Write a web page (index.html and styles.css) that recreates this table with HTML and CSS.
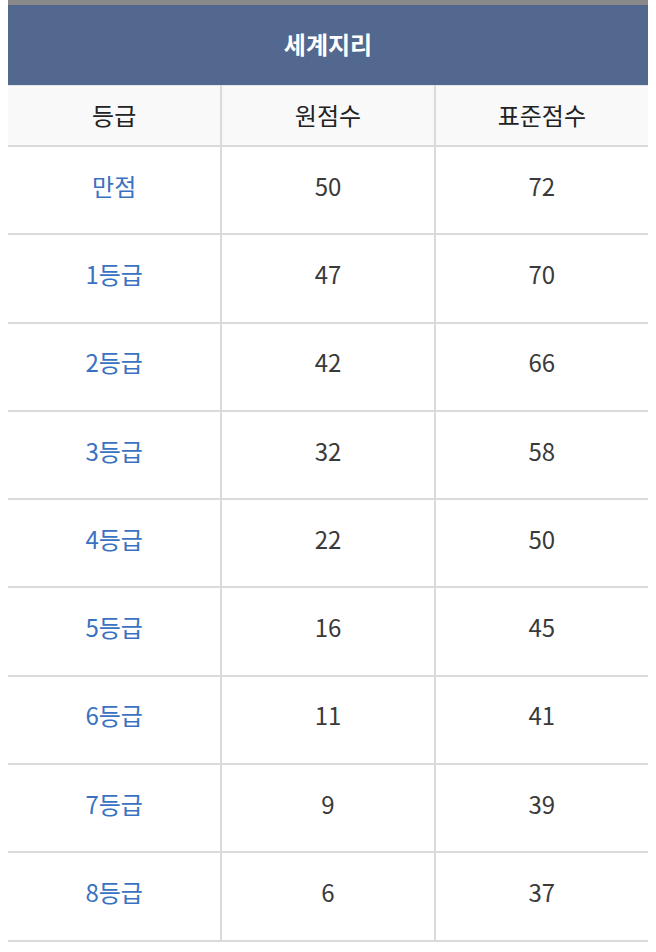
FILE: index.html
```html
<!DOCTYPE html>
<html lang="ko">
<head>
<meta charset="utf-8">
<link rel="stylesheet" href="styles.css">
</head>
<body>
<div class="wrap">
  <div class="title">세계지리</div>
  <table class="grade">
    <thead>
      <tr><th>등급</th><th>원점수</th><th>표준점수</th></tr>
    </thead>
    <tbody>
      <tr><td class="g">만점</td><td>50</td><td>72</td></tr>
      <tr><td class="g">1등급</td><td>47</td><td>70</td></tr>
      <tr><td class="g">2등급</td><td>42</td><td>66</td></tr>
      <tr><td class="g">3등급</td><td>32</td><td>58</td></tr>
      <tr><td class="g">4등급</td><td>22</td><td>50</td></tr>
      <tr><td class="g">5등급</td><td>16</td><td>45</td></tr>
      <tr><td class="g">6등급</td><td>11</td><td>41</td></tr>
      <tr><td class="g">7등급</td><td>9</td><td>39</td></tr>
      <tr><td class="g">8등급</td><td>6</td><td>37</td></tr>
    </tbody>
  </table>
</div>
</body>
</html>
```

FILE: styles.css
```css
html, body {
  margin: 0;
  padding: 0;
  background: #fff;
}
.wrap {
  margin: 0 8px;
  width: 640px;
  font-family: "Noto Sans CJK KR", "Noto Sans", sans-serif;
  color: #3a3a3a;
}
.title {
  border-top: 5px solid #8a8a8a;
  background: #52688f;
  color: #fff;
  font-weight: 700;
  font-size: 24px;
  height: 80px;
  line-height: 78px;
  text-align: center;
}
.grade {
  width: 640px;
  border-collapse: collapse;
  table-layout: fixed;
  border-top: 1px solid #e6e6e6;
}
.grade th, .grade td {
  text-align: center;
  border-left: 2px solid #dadada;
  border-bottom: 2px solid #dadada;
  padding: 0;
}
.grade th:first-child, .grade td:first-child {
  border-left: none;
}
.grade th {
  background: #f9f9f9;
  font-weight: 400;
  font-size: 24px;
  height: 57px;
  padding-bottom: 2px;
  color: #222;
}
.grade td {
  height: 76.3px;
  padding-bottom: 10px;
  font-size: 24px;
}
.grade td.g {
  color: #3a72c2;
}
```
